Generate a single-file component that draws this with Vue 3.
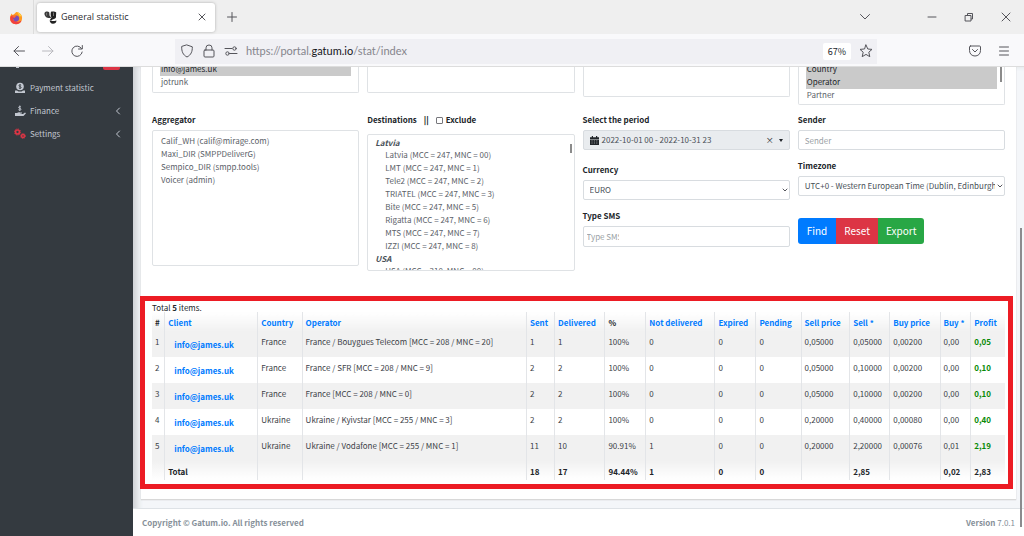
<script setup>
import { ref } from 'vue'

const exclude = ref(false)

const columns = [
  { label: '#', width: 1.5 },
  { label: 'Client', width: 10.9, sort: true },
  { label: 'Country', width: 5.2, sort: true },
  { label: 'Operator', width: 26.3, sort: true },
  { label: 'Sent', width: 3.3, sort: true },
  { label: 'Delivered', width: 5.9, sort: true },
  { label: '%', width: 4.8 },
  { label: 'Not delivered', width: 8.1, sort: true },
  { label: 'Expired', width: 4.8, sort: true },
  { label: 'Pending', width: 5.3, sort: true },
  { label: 'Sell price', width: 5.7, sort: true },
  { label: 'Sell *', width: 4.7, sort: true },
  { label: 'Buy price', width: 5.9, sort: true },
  { label: 'Buy *', width: 3.6, sort: true },
  { label: 'Profit', width: 4, sort: true },
]

const rows = [
  ['France', 'France / Bouygues Telecom [MCC = 208 / MNC = 20]', '1', '1', '100%', '0', '0', '0', '0,05000', '0,05000', '0,00200', '0,00', '0,05'],
  ['France', 'France / SFR [MCC = 208 / MNC = 9]', '2', '2', '100%', '0', '0', '0', '0,05000', '0,10000', '0,00200', '0,00', '0,10'],
  ['France', 'France [MCC = 208 / MNC = 0]', '2', '2', '100%', '0', '0', '0', '0,05000', '0,10000', '0,00200', '0,00', '0,10'],
  ['Ukraine', 'Ukraine / Kyivstar [MCC = 255 / MNC = 3]', '2', '2', '100%', '0', '0', '0', '0,20000', '0,40000', '0,00080', '0,00', '0,40'],
  ['Ukraine', 'Ukraine / Vodafone [MCC = 255 / MNC = 1]', '11', '10', '90.91%', '1', '0', '0', '0,20000', '2,20000', '0,00076', '0,01', '2,19'],
]

const totals = ['', 'Total', '', '', '18', '17', '94.44%', '1', '0', '0', '', '2,85', '', '0,02', '2,83']

const aggregators = ['Calif_WH (calif@mirage.com)', 'Maxi_DIR (SMPPDeliverG)', 'Sempico_DIR (smpp.tools)', 'Voicer (admin)']
const latvia = [
  'Latvia (MCC = 247, MNC = 00)',
  'LMT (MCC = 247, MNC = 1)',
  'Tele2 (MCC = 247, MNC = 2)',
  'TRIATEL (MCC = 247, MNC = 3)',
  'Bite (MCC = 247, MNC = 5)',
  'Rigatta (MCC = 247, MNC = 6)',
  'MTS (MCC = 247, MNC = 7)',
  'IZZI (MCC = 247, MNC = 8)',
]
</script>

<template>
  <div class="window">
    <header class="browser">
      <div class="tabs">
        <div class="pinned">
          <svg width="14" height="14" viewBox="0 0 14 14">
            <path d="M7 1.3C9 .6 9.600 2 11 2.600C12.500 3.500 13.400 6 13 8.200C12.500 11.300 10 13.200 7 13.200C3.500 13.200 1 10.600 1 7.500C1 5.500 1.600 4 2.700 2.500L3.500 4L5 3.300Z" fill="#ff9a1f" />
            <path d="M1.200 7C1.500 5 2.300 4.400 3.500 4.500L6 6L4 9L9 11L12.600 9.500C11.500 12 9.500 13.200 7 13.200C3.500 13.200 1 10.500 1.200 7Z" fill="#f2413f" />
            <circle cx="7.200" cy="7.500" r="2.900" fill="#7a4fb5" />
            <path d="M3.500 4.500C5 4 6 4.800 7.500 5C6.500 6 6 6 5.500 7L3.500 6Z" fill="#ff6a2c" />
            <path d="M7.500 1C9 2 10 3.600 10.500 5.500L12.500 5C11.500 2.500 9.500 1.500 7.500 1Z" fill="#ffd33d" />
          </svg>
        </div>
        <div class="tab">
          <svg width="13" height="13" viewBox="0 0 13 13">
            <path d="M.5 2C1.500 .2 4 .2 5.200 1.200L5.600 4.800L7.200 6.500C6.500 7.200 5.500 7.200 4.500 7C2 6.600 .1 4.500 .5 2Z" fill="#3a3a3a" />
            <path d="M7 .8C8.500 .2 11 .3 12.200 1.500L12 5C12.300 6.500 11.500 7.600 10 8C8.800 8.300 8 8.600 7.500 9.500L5.800 9L7.500 6.500C6.500 5 6.500 3 7 .8Z" fill="#222" />
            <path d="M5.800 9C7 10.300 9 10.400 12.500 9.500C12.300 11.800 11 12.800 9 12.800C6.800 12.700 5.500 11 5.800 9Z" fill="#222" />
            <path d="M2.600 1.800V4.500M9.500 1.500V5" stroke="#999" stroke-width=".7" fill="none" />
          </svg>
          <span>General statistic</span>
          <button class="icon close" aria-label="Close tab">
            <svg width="8" height="8" viewBox="0 0 8 8"><path d="M1 1L7 7M7 1L1 7" /></svg>
          </button>
        </div>
        <button class="icon newtab" aria-label="New tab">
          <svg width="10" height="10" viewBox="0 0 10 10"><path d="M5 .5V9.500M.5 5H9.500" /></svg>
        </button>
        <div class="controls">
          <button class="icon" aria-label="List tabs"><svg width="12" height="12" viewBox="0 0 12 12"><path d="M1.500 3.500L6 8L10.500 3.500" /></svg></button>
          <button class="icon min" aria-label="Minimize"><svg width="12" height="12" viewBox="0 0 12 12"><path d="M2 6H10" /></svg></button>
          <button class="icon" aria-label="Restore"><svg width="12" height="12" viewBox="0 0 12 12"><path d="M2.500 4.500H8V10H2.500ZM4.500 4.300V2.500H9.500V8H8.200" /></svg></button>
          <button class="icon" aria-label="Close"><svg width="12" height="12" viewBox="0 0 12 12"><path d="M2 2L10 10M10 2L2 10" /></svg></button>
        </div>
      </div>
      <div class="toolbar">
        <button class="icon" aria-label="Back"><svg width="14" height="14" viewBox="0 0 14 14"><path d="M12.500 7H2M6.500 2.500L2 7L6.500 11.500" /></svg></button>
        <button class="icon faint" aria-label="Forward"><svg width="14" height="14" viewBox="0 0 14 14"><path d="M1.500 7H12M7.500 2.500L12 7L7.500 11.500" /></svg></button>
        <button class="icon" aria-label="Reload"><svg width="14" height="14" viewBox="0 0 14 14"><path d="M11.500 4.500A5.200 5.200 0 1 0 12.200 8M12.300 1.500V5H8.500" /></svg></button>
        <div class="address">
          <svg width="14" height="14" viewBox="0 0 14 14"><path d="M7 1L12.300 2.800C12.500 7.500 11 11 7 13C3 11 1.500 7.500 1.700 2.800Z" /></svg>
          <svg width="14" height="14" viewBox="0 0 14 14"><path d="M3 6H11Q12 6 12 7V12Q12 13 11 13H3Q2 13 2 12V7Q2 6 3 6ZM4 6V3.800Q4 1 7 1Q10 1 10 3.800V6" /></svg>
          <svg width="14" height="14" viewBox="0 0 14 14"><path d="M1 4.500H8M6 9.500H13" /><circle cx="10.500" cy="4.500" r="1.700" /><circle cx="3.500" cy="9.500" r="1.700" /></svg>
          <span class="url">https://portal.<b>gatum.io</b>/stat/index</span>
          <span class="zoom">67%</span>
          <button class="icon" aria-label="Bookmark"><svg width="14" height="14" viewBox="0 0 14 14"><path d="M7 1L8.800 5L13 5.400L9.800 8.200L10.800 12.700L7 10.400L3.200 12.700L4.200 8.200L1 5.400L5.200 5Z" /></svg></button>
        </div>
        <div class="tools">
          <button class="icon" aria-label="Pocket"><svg width="14" height="14" viewBox="0 0 14 14"><path d="M2.500 2H11.500Q12.500 2 12.500 3V6.500C12.500 10 10 12 7 12C4 12 1.500 10 1.500 6.500V3Q1.500 2 2.500 2ZM4.500 5.500L7 8L9.500 5.500" /></svg></button>
          <button class="icon" aria-label="Menu"><svg width="12" height="12" viewBox="0 0 12 12"><path d="M1.500 2H10.500M1.500 6H10.500M1.500 10H10.500" /></svg></button>
        </div>
      </div>
    </header>

    <div class="page">
      <nav class="sidebar">
        <div class="previous"><i class="tip"></i><i class="badge"></i></div>
        <a href="#">
          <svg width="12" height="12" viewBox="0 0 12 12"><circle cx="6" cy="4.500" r="3.800" fill="#c2c7d0" /><path d="M1 8.500H3L4.500 9.500H7.500L9 8.500H11V11H1Z" fill="#c2c7d0" /><path d="M7.200 3.200C6.500 2.700 4.900 2.700 4.900 3.700C4.900 4.800 7.200 4.300 7.200 5.500C7.200 6.500 5.500 6.500 4.800 5.900M6 2V7" stroke="#343a40" stroke-width=".8" fill="none" /></svg>
          <span>Payment statistic</span>
        </a>
        <a href="#">
          <svg width="12" height="12" viewBox="0 0 12 12"><path d="M1 8H3C4.500 6.800 5.500 7.200 6 7.500H8V8.500H6.500V9H9L11 7.500L12 8.300L9.500 11H1Z" fill="#c2c7d0" /><path d="M7 2C6.200 1.300 4.600 1.500 4.600 2.400C4.600 3.600 7 3 7 4.300C7 5.300 5.200 5.300 4.400 4.700M5.800 .5V6" stroke="#c2c7d0" stroke-width=".9" fill="none" /></svg>
          <span>Finance</span>
          <svg class="chev" width="6" height="8" viewBox="0 0 6 8"><path d="M4.500 1L1.500 4L4.500 7" /></svg>
        </a>
        <a href="#">
          <svg width="12" height="12" viewBox="0 0 12 12" fill="none" stroke="#dc3545"><circle cx="3.500" cy="4" r="2" stroke-width="1.700" /><circle cx="3.500" cy="4" r="3.100" stroke-width=".8" stroke-dasharray="1.300 1.100" /><circle cx="9" cy="8" r="1.500" stroke-width="1.500" /><circle cx="9" cy="8" r="2.500" stroke-width=".8" stroke-dasharray="1.100 .9" /></svg>
          <span>Settings</span>
          <svg class="chev" width="6" height="8" viewBox="0 0 6 8"><path d="M4.500 1L1.500 4L4.500 7" /></svg>
        </a>
      </nav>

      <main>
        <section class="card">
          <form class="filters" @submit.prevent>
            <select class="list cut short" multiple aria-label="Client">
              <option class="on">info@james.uk</option>
              <option>jotrunk</option>
            </select>
            <select class="list cut short" multiple aria-label="Country"></select>
            <select class="list cut middle" multiple aria-label="Operator"></select>
            <div class="listwrap">
              <select class="list cut tall" multiple aria-label="Group by">
                <option class="on">Country</option>
                <option class="on">Operator</option>
                <option>Partner</option>
              </select>
              <i class="thumb upper"></i>
            </div>

            <div class="col">
              <label for="aggregator">Aggregator</label>
              <select id="aggregator" class="list" multiple>
                <option v-for="a in aggregators" :key="a">{{ a }}</option>
              </select>
            </div>

            <div class="col">
              <div class="labels">
                <label for="destinations">Destinations</label>
                <b>||</b>
                <label class="check"><input v-model="exclude" type="checkbox" />Exclude</label>
              </div>
              <div class="listwrap destinations">
                <select id="destinations" class="list grouped" multiple>
                  <optgroup label="Latvia">
                    <option v-for="d in latvia" :key="d">{{ d }}</option>
                  </optgroup>
                  <optgroup label="USA">
                    <option>USA (MCC = 310, MNC = 00)</option>
                  </optgroup>
                </select>
                <i class="thumb"></i>
              </div>
            </div>

            <div class="col">
              <label for="period">Select the period</label>
              <button id="period" type="button" class="control period">
                <svg width="9" height="9" viewBox="0 0 9 9"><path d="M0 1.200H1.800V0H3V1.200H6V0H7.200V1.200H9V3H0ZM0 3.400H9V9H0Z" fill="#212529" /><path d="M1.500 4.900H7.500M1.500 7H7.500" stroke="#e9ecef" stroke-width=".6" stroke-dasharray="1 1.400" /></svg>
                <span>2022-10-01 00 - 2022-10-31 23</span>
                <span class="clear">×</span>
                <i class="caret"></i>
              </button>
              <label class="far" for="currency">Currency</label>
              <div class="selectwrap">
                <select id="currency" class="control"><option>EURO</option></select>
                <svg width="6" height="6" viewBox="0 0 6 6"><path d="M1 2L3 4L5 2" /></svg>
              </div>
              <label class="near" for="type">Type SMS</label>
              <div class="control tags"><input id="type" placeholder="Type SMS" /></div>
            </div>

            <div class="col">
              <label for="sender">Sender</label>
              <input id="sender" class="control" placeholder="Sender" />
              <label class="near" for="zone">Timezone</label>
              <div class="selectwrap">
                <select id="zone" class="control"><option>UTC+0 - Western European Time (Dublin, Edinburgh, Lisbon, London)</option></select>
                <svg width="6" height="6" viewBox="0 0 6 6"><path d="M1 2L3 4L5 2" /></svg>
              </div>
              <div class="actions">
                <button class="find">Find</button>
                <button class="reset" type="button">Reset</button>
                <button class="export" type="button">Export</button>
              </div>
            </div>
          </form>

          <div class="results">
            <p>Total <b>5</b> items.</p>
            <table>
              <colgroup>
                <col v-for="c in columns" :key="c.label" :style="{ width: c.width + '%' }" />
              </colgroup>
              <thead>
                <tr>
                  <th v-for="c in columns" :key="c.label"><a v-if="c.sort" href="#">{{ c.label }}</a><template v-else>{{ c.label }}</template></th>
                </tr>
              </thead>
              <tbody>
                <tr v-for="(r, i) in rows" :key="i">
                  <td>{{ i + 1 }}</td>
                  <td class="client"><a href="#">info@james.uk</a></td>
                  <td v-for="(v, j) in r" :key="j" :class="{ profit: j === 12 }">{{ v }}</td>
                </tr>
              </tbody>
              <tfoot>
                <tr><td v-for="(t, i) in totals" :key="i">{{ t }}</td></tr>
              </tfoot>
            </table>
            <div class="marker"></div>
          </div>
        </section>
        <footer><b>Copyright © Gatum.io. All rights reserved</b><span><b>Version</b> 7.0.1</span></footer>
        <i class="scroll"></i>
      </main>
    </div>
  </div>
</template>

<style>
body { margin: 0; overflow: hidden; }
</style>

<style scoped>
* { box-sizing: border-box; }
.window { display: flex; flex-direction: column; height: 100vh; overflow: hidden; font: 8px/12px "Noto Sans CJK SC", "Open Sans", sans-serif; color: #212529; }
button, input, select { font: inherit; color: inherit; margin: 0; outline: 0; }
a { color: #007bff; text-decoration: none; }
svg { flex: none; display: block; }

.browser { flex: none; }
.icon { border: 0; background: none; padding: 0; display: flex; align-items: center; justify-content: center; }
.icon svg, .address > svg, .selectwrap svg, .chev { fill: none; stroke: #55555b; stroke-width: 1; stroke-linejoin: round; stroke-linecap: round; }
.tabs { height: 34px; background: #efefef; display: flex; align-items: center; }
.pinned { width: 34px; height: 34px; padding: 11px 0 0 9px; border-right: 1px solid #dcdcdc; }
.tab { width: 178px; height: 29px; margin-left: 3px; padding: 0 9px 0 7px; background: #fff; border-radius: 3px; box-shadow: 0 0 3px #aaa; display: flex; align-items: center; gap: 4px; font-family: "Open Sans", "Noto Sans", sans-serif; font-size: 9px; color: #2b2b30; }
.close { margin-left: auto; }
.newtab { margin-left: 12px; }
.controls { margin-left: auto; display: flex; gap: 25px; padding-right: 12px; }
.controls .min { margin-left: 30px; }
.toolbar { height: 33px; background: #f9f9fb; border-bottom: 1px solid #ddd; display: flex; align-items: center; padding: 2px 14px 0 12px; gap: 15px; }
.icon.faint svg { stroke: #b9b9be; }
.address { flex: 1; height: 25px; margin-left: 76px; background: #f0f0f4; display: flex; align-items: center; gap: 8px; padding: 0 4px 0 5px; }
.url { font-family: Lato, "Open Sans", sans-serif; font-size: 11px; color: #85858c; }
.url b { font-weight: 400; color: #15141a; }
.zoom { margin-left: auto; width: 28px; height: 17px; line-height: 17px; font-size: 9px; text-align: center; background: #fff; border-radius: 2px; }
.tools { display: flex; align-items: center; gap: 16px; padding-left: 76px; }

.page { flex: 1; min-height: 0; display: flex; }
.sidebar { width: 133px; flex: none; background: #343a40; display: flex; flex-direction: column; }
.previous { height: 9px; padding: 0 13px 0 16px; display: flex; justify-content: space-between; }
.tip { width: 3px; height: 1px; background: #c2c7d0; }
.badge { width: 17px; height: 3px; background: #dc3545; border-radius: 0 0 2px 2px; }
.sidebar a { height: 23px; padding: 0 12px 0 14px; display: flex; align-items: center; gap: 4px; color: #c2c7d0; }
.chev { margin-left: auto; stroke: #c2c7d0; }

main { flex: 1; min-width: 0; position: relative; overflow: hidden; display: flex; flex-direction: column; background: #f4f6f9; box-shadow: inset 6px 0 6px -2px #cdd0d4; }
.card { margin: 0 8px 8px; padding: 0 11px 19px; background: #fff; border-bottom: 1px solid #d8d8d8; box-shadow: 0 0 1px #bbb; }
.filters { display: grid; grid-template-columns: repeat(4, minmax(0, 1fr)); column-gap: 8px; align-items: start; }
.list { display: block; width: 100%; height: 136px; padding: 4px 8px; border: 1px solid #dfe2e5; border-radius: 2px; background: #fff; overflow: hidden; scrollbar-width: none; color: #5b6168; }
.list option { min-height: 13px; height: 13px; line-height: 13px; padding: 0; }
.grouped { height: 137px; padding: 2px 5px; }
.list optgroup { line-height: 11px; font-style: italic; font-weight: 700; color: #495057; }
.list optgroup option { font-style: normal; font-weight: 400; padding-left: 12px; color: #5b6168; }
.list option.on { background: #cacaca; color: #212529; padding-left: 1px; }
.list.cut { border-top: 0; border-radius: 0 0 2px 2px; padding: 0 7px; margin-top: -4px; }
.list.cut option { padding-left: 1px; }
.short { height: 30px; }
.middle { height: 34px; }
.tall { height: 42px; }
.listwrap { position: relative; }
.destinations { margin-top: 4px; }
.thumb { position: absolute; right: 3px; top: 10px; width: 2px; height: 9px; background: #8b8b8b; }
.upper { top: 0; height: 15px; right: 3px; }
.col { padding-top: 9px; display: flex; flex-direction: column; }
.col label, .labels { font-weight: 700; height: 12px; margin-bottom: 4px; }
.labels { display: flex; gap: 7px; }
.labels label { margin: 0; }
.labels .check { display: flex; align-items: center; gap: 3px; }
.check input { appearance: none; width: 7px; height: 7px; border: 1px solid #77777c; border-radius: 1px; background: #fff; }
.col .far { margin-top: 14px; }
.col .near { margin-top: 10px; }
.control { display: block; width: 100%; height: 20px; padding: 0 6px; border: 1px solid #d8dce0; border-radius: 2px; background: #fff; color: #495057; appearance: none; }
.control::placeholder, .tags input::placeholder { color: #9a9fa5; opacity: 1; }
.selectwrap { position: relative; }
.selectwrap select { padding-right: 9px; text-overflow: clip; }
.selectwrap svg { position: absolute; right: 2px; top: 7px; }
.period { display: flex; align-items: center; gap: 3px; background: #e9ecef; }
.clear { margin-left: auto; color: #212529; }
.caret { border: 2px solid transparent; border-top: 3px solid #212529; border-bottom: 0; margin: 0 0 0 2px; }
.tags { height: 21px; padding: 0 3px; display: flex; align-items: center; }
.tags input { width: 32px; border: 0; padding: 0; background: none; }
.actions { display: flex; margin-top: 22px; height: 26px; }
.actions button { border: 0; color: #fff; font-size: 10px; padding: 0 8px; }
.actions .find { background: #007bff; border-radius: 3px 0 0 3px; padding: 0 9px; }
.reset { background: #dc3545; }
.export { background: #28a745; border-radius: 0 3px 3px 0; }

.results { position: relative; margin-top: 30px; }
.results p { margin: 0; padding-top: 1px; height: 11px; }
table { width: 100%; table-layout: fixed; border-collapse: collapse; }
th, td { text-align: left; padding: 5px 0 0 3px; vertical-align: top; border-left: 1px solid #e3e5e8; white-space: nowrap; line-height: 12px; }
th:first-child, td:first-child { border-left: 0; }
th, tfoot td { height: 19px; }
th { background: linear-gradient(#fff, #f1f1f1); }
tbody td { height: 26px; color: #3c4147; }
tbody tr:nth-child(odd) { background: #f1f1f1; }
tbody .client { padding: 8px 0 0 9px; font-weight: 700; }
tbody .profit { color: #078a07; font-weight: 700; }
tfoot td { font-weight: 700; background: linear-gradient(#f1f1f1, #fff); }
.marker { position: absolute; inset: -5px -8px -9px -12px; border: 5px solid #ec1c24; pointer-events: none; }
footer { flex: 1; background: #fff; border-top: 1px solid #dee2e6; display: flex; justify-content: space-between; align-items: center; padding: 1px 9px 0; color: #869099; }
.scroll { position: absolute; right: 2px; top: 161px; bottom: 9px; width: 2px; background: #8b8b8e; }
</style>
